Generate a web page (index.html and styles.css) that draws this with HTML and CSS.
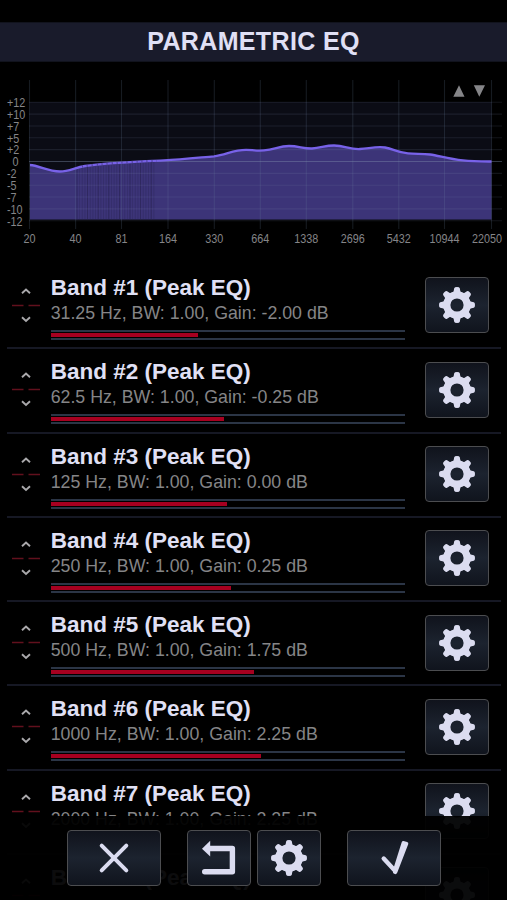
FILE: index.html
```
<!DOCTYPE html>
<html lang="en">
<head>
<meta charset="utf-8">
<meta name="viewport" content="width=device-width, initial-scale=1">
<title>Parametric EQ</title>
<link rel="stylesheet" href="styles.css">
</head>
<body>
<svg class="defs" width="0" height="0" aria-hidden="true">
  <defs>
    <symbol id="gear" viewBox="-18 -18 36 36">
      <g fill="currentColor">
        <path id="tooth" d="M-4.6-12 -3.4-13.6 -2.8-16.8Q-2.5-18 0-18Q2.5-18 2.8-16.8L3.4-13.6 4.6-12Z"/>
        <use href="#tooth" transform="rotate(45)"/>
        <use href="#tooth" transform="rotate(90)"/>
        <use href="#tooth" transform="rotate(135)"/>
        <use href="#tooth" transform="rotate(180)"/>
        <use href="#tooth" transform="rotate(225)"/>
        <use href="#tooth" transform="rotate(270)"/>
        <use href="#tooth" transform="rotate(315)"/>
      </g>
      <circle r="10.2" fill="none" stroke="currentColor" stroke-width="7.2"/>
    </symbol>
    <symbol id="mover" viewBox="0 0 30 40">
      <g fill="none" stroke="#aaa9ac" stroke-width="1.9">
        <path d="M11 8.3 15 4.6 19 8.3"/>
        <path d="M11 32.3 15 36 19 32.3"/>
      </g>
      <path d="M1 20.4H12.5M17.5 20.4H29" stroke="#62101d" stroke-width="1.5"/>
    </symbol>
  </defs>
</svg>
<div class="screen">
  <header class="header"><h1>PARAMETRIC EQ</h1></header>
  <svg class="chart" viewBox="0 62 507 203" width="507" height="203" id="chart"></svg>
  <main class="bands" id="bands"></main>
  <footer class="toolbar">
    <button class="btn wide" aria-label="Cancel"><svg width="32" height="32" viewBox="0 0 32 32"><path d="M3.7 3.7 28.3 28.3M28.3 3.7 3.7 28.3" fill="none" stroke="currentColor" stroke-width="4" stroke-linecap="round"/></svg></button>
    <button class="btn undo" aria-label="Undo"><svg width="36" height="36" viewBox="0 0 36 36"><path d="M3.7 31.8H31.4V8.5H9" fill="none" stroke="currentColor" stroke-width="5.4" stroke-linecap="round" stroke-linejoin="round"/><path d="M9.2.8V16.6L1 8.7Z" fill="currentColor"/></svg></button>
    <button class="btn settings" aria-label="Settings"><svg class="gear"><use href="#gear"/></svg></button>
    <button class="btn wide confirm" aria-label="Apply"><svg width="30" height="36" viewBox="0 0 30 36"><path d="M4.7 18.6 15.8 30.4" fill="none" stroke="currentColor" stroke-width="4.4" stroke-linecap="round"/><path d="M14 33Q17 35.6 18.3 32.4L29.3 4Q29.6 2.6 28.1 2L24.5 1.1Q23.1 1 22.7 2.3L14.6 28Z" fill="currentColor"/></svg></button>
  </footer>
</div>
<script src="app.js"></script>
</body>
</html>
```
FILE: styles.css
```
* { box-sizing: border-box; }
body {
  margin: 0;
  background: #000;
  color: #e0e0f5;
  font-family: "Liberation Sans", Arial, sans-serif;
}
.defs { position: absolute; }
.screen {
  position: relative;
  width: 507px;
  height: 900px;
  padding-top: 22px;
  overflow: hidden;
  background: #000;
}
.header {
  height: 40px;
  background: #191b2b;
  border-top: 1px solid #11131d;
  border-bottom: 1px solid #11131d;
  display: flex;
  align-items: flex-start;
  justify-content: center;
}
.header h1 {
  margin: 0;
  font-size: 25px;
  line-height: 37px;
  font-weight: 700;
  letter-spacing: 0.35px;
}
.chart { display: block; }
.chart text { font-size: 12px; fill: #858588; }
.band {
  height: 84.3px;
  margin: 0 6px 0 7px;
  padding-left: 4px;
  display: flex;
  align-items: flex-start;
  border-bottom: 2px solid #161824;
}
.mover { width: 30px; height: 40px; margin-top: 20px; flex: none; }
.info { width: 354px; margin-left: 9.7px; padding-top: 10px; flex: none; }
.name {
  margin: 0;
  font-size: 22.5px;
  line-height: 26px;
  font-weight: 700;
  white-space: nowrap;
}
.detail {
  margin: 0;
  font-size: 17.76px;
  line-height: 25px;
  color: #858587;
  white-space: nowrap;
}
.gain {
  height: 10px;
  margin-top: 4px;
  padding: 1px 0;
  border-top: 2px solid #2b3546;
  border-bottom: 2px solid #2b3546;
}
.level { height: 4px; background: #a60020; }
.btn {
  width: 64px;
  height: 56px;
  padding: 0;
  flex: none;
  display: flex;
  align-items: center;
  justify-content: center;
  color: #dbdcf0;
  background: linear-gradient(#10131c, #1c232f 50%, #10141d);
  border: 1px solid #4c4d50;
  border-radius: 4px;
}
.band .btn { margin: 12.4px 0 0 20.8px; }
.gear { width: 36px; height: 36px; }
.toolbar {
  position: absolute;
  inset: 816px 0 0;
  padding: 14px 66px 0 67px;
  display: flex;
  align-items: flex-start;
  background: rgba(0, 0, 0, 0.95);
}
.toolbar .wide { width: 94px; }
.toolbar .undo { margin-left: 26px; }
.toolbar .settings { margin-left: 6px; }
.toolbar .confirm { margin-left: 26px; }
```
FILE: app.js
```
const xs = [29.5, 75.6, 121.5, 168, 214.3, 260.3, 306.3, 352.8, 398.8, 444.5, 491.5];
const freqs = [20, 40, 81, 164, 330, 664, 1338, 2696, 5432, 10944, 22050];
const gains = ["+12", "+10", "+7", "+5", "+2", "0", "-2", "-5", "-7", "-10", "-12"];
const label = (s, x, y, anchor) =>
  `<text transform="translate(${x} ${y}) scale(.9 1)" text-anchor="${anchor}">${s}</text>`;

const curve = "M30 165C39 165.5 48 171.5 60 171.5C69 171.5 75 167.5 85 166C104 162.8 138 161.5 164 160.4C181 159.5 200 157.5 214 156.3C226 155 233 149.9 246 149.9C252 149.9 256 151 264 150.4C275 149.5 279 146 289 146C299 146 303 148.8 312 148.5C321 148 325 145.5 334 145.5C345 145.5 349 149.5 360 149C369 148.5 376 146.3 385 147.5C394 149 397 152.7 408 153.3C416 154 422 153.6 430 154.5C439 155.6 448 159 463 160.4C473 161.4 481 161.4 491.5 161.5";

let svg = `<rect x="29.5" y="102" width="462" height="118" fill="#0b0c15"/>`;
svg += `<path d="${curve}V219.5H30Z" fill="#3c3478"/>`;
for (let i = 0; i < 30; i++) {
  const x = 77 + i * 2.65;
  svg += `<path d="M${x} ${168 - i * .22}V219" stroke="#24204a" stroke-width=".7" opacity="${i % 4 ? .38 : .8}"/>`;
}
xs.forEach((x) => {
  svg += `<path d="M${x} 80V229" stroke="#7085a3" stroke-opacity=".2" stroke-width="1.1"/>`;
});
gains.forEach((g, i) => {
  const y = 102.3 + i * 11.84;
  svg += `<path d="M29 ${y}H502" stroke="#8290b0" stroke-opacity="${i === 5 ? .4 : .15}" stroke-width="1.1"/>`;
  svg += label(g, g === "0" ? 12.5 : 7, y + 4.8, "start");
});
svg += `<path d="${curve}" fill="none" stroke="#7862e8" stroke-width="2.3"/>`;
svg += `<path d="M82 166.4Q108 162.5 157 160.8" fill="none" stroke="#3c3473" stroke-width="2.3" stroke-dasharray="1 4" opacity=".7"/>`;
freqs.forEach((f, i) => {
  svg += label(f, i === 10 ? 487 : xs[i], 242.5, "middle");
});
svg += `<path d="M459 85.3 464.5 96.7H453.3ZM473.8 85.3H485L479.3 96.7Z" fill="#858588"/>`;
document.getElementById("chart").innerHTML = svg;

const bands = [
  ["31.25", "-2.00", 147],
  ["62.5", "-0.25", 173],
  ["125", "0.00", 176.5],
  ["250", "0.25", 180],
  ["500", "1.75", 203],
  ["1000", "2.25", 210.5],
  ["2000", "2.25", null],
  null
];
document.getElementById("bands").innerHTML = bands.map((band, i) => {
  const detail = band ? `<p class="detail">${band[0]} Hz, BW: 1.00, Gain: ${band[1]} dB</p>` : "";
  const gain = band && band[2] !== null
    ? `<div class="gain"><div class="level" style="width:${band[2]}px"></div></div>` : "";
  return `
  <section class="band">
    <svg class="mover"><use href="#mover"/></svg>
    <div class="info">
      <h2 class="name">Band #${i + 1} (Peak EQ)</h2>
      ${detail}
      ${gain}
    </div>
    <button class="btn" aria-label="Band ${i + 1} settings"><svg class="gear"><use href="#gear"/></svg></button>
  </section>`;
}).join("");
```
